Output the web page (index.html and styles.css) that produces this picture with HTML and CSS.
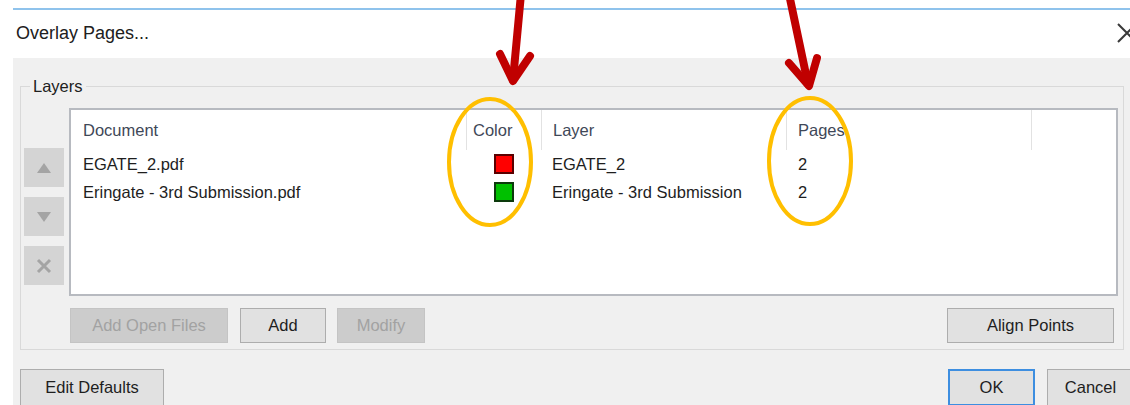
FILE: index.html
```html
<!DOCTYPE html>
<html lang="en">
<head>
<meta charset="utf-8">
<title>Overlay Pages...</title>
<link rel="stylesheet" href="styles.css">
</head>
<body>
<div class="window">
  <div class="titlebar">
    <span class="title">Overlay Pages...</span>
    <svg class="close" width="20" height="20" viewBox="0 0 20 20" aria-hidden="true">
      <path d="M1 1 L19 19 M19 1 L1 19" stroke="#3a3a3a" stroke-width="2" fill="none"/>
    </svg>
  </div>
  <div class="panel">
    <fieldset class="group">
      <legend>Layers</legend>
      <div class="group-main">
        <div class="tools">
          <button class="tool" type="button" aria-label="Move up">
            <svg width="16" height="12" viewBox="0 0 16 12"><path d="M8 1 L15 11 L1 11 Z" fill="#a4a4a4"/></svg>
          </button>
          <button class="tool" type="button" aria-label="Move down">
            <svg width="16" height="12" viewBox="0 0 16 12"><path d="M1 1 L15 1 L8 11 Z" fill="#a4a4a4"/></svg>
          </button>
          <button class="tool" type="button" aria-label="Remove">
            <svg width="16" height="16" viewBox="0 0 16 16"><path d="M2 2 L14 14 M14 2 L2 14" stroke="#a4a4a4" stroke-width="3" fill="none"/></svg>
          </button>
        </div>
        <div class="list">
          <div class="row head">
            <div class="cell c-doc">Document</div>
            <div class="cell c-color">Color</div>
            <div class="cell c-layer">Layer</div>
            <div class="cell c-pages">Pages</div>
            <div class="cell c-rest"></div>
          </div>
          <div class="row">
            <div class="cell c-doc">EGATE_2.pdf</div>
            <div class="cell c-color"><span class="swatch red"></span></div>
            <div class="cell c-layer">EGATE_2</div>
            <div class="cell c-pages">2</div>
            <div class="cell c-rest"></div>
          </div>
          <div class="row">
            <div class="cell c-doc">Eringate - 3rd Submission.pdf</div>
            <div class="cell c-color"><span class="swatch green"></span></div>
            <div class="cell c-layer">Eringate - 3rd Submission</div>
            <div class="cell c-pages">2</div>
            <div class="cell c-rest"></div>
          </div>
        </div>
      </div>
      <div class="group-actions">
        <button class="btn disabled w-open" type="button">Add Open Files</button>
        <button class="btn w-add" type="button">Add</button>
        <button class="btn disabled w-modify" type="button">Modify</button>
        <button class="btn w-align" type="button">Align Points</button>
      </div>
    </fieldset>
    <div class="footer">
      <button class="btn w-defaults" type="button">Edit Defaults</button>
      <button class="btn primary w-ok" type="button">OK</button>
      <button class="btn w-cancel" type="button">Cancel</button>
    </div>
  </div>
</div>

<svg class="marks" width="1130" height="405" viewBox="0 0 1130 405" aria-hidden="true">
  <g stroke="#c00000" stroke-width="8" fill="none" stroke-linecap="round" stroke-linejoin="round">
    <path d="M521 -6 L513 80"/>
    <path d="M500 54 L513 81 L530 56"/>
    <path d="M789 -6 L808 84"/>
    <path d="M789 63 L809 86 L817 58"/>
  </g>
  <g stroke="#ffbf00" stroke-width="4" fill="none">
    <ellipse cx="490" cy="162" rx="41" ry="63"/>
    <ellipse cx="810" cy="161" rx="41" ry="63"/>
  </g>
</svg>
</body>
</html>
```

FILE: styles.css
```css
html, body {
  margin: 0;
  padding: 0;
  background: #ffffff;
  overflow: hidden;
}

body {
  width: 1130px;
  height: 405px;
  position: relative;
  font-family: "Liberation Sans", Arial, sans-serif;
  font-size: 16.5px;
  color: #1e1e1e;
}

.window {
  margin: 8px 0 0 13px;
  border-top: 2px solid #8fc3ec;
  height: 397px;
  display: flex;
  flex-direction: column;
}

.titlebar {
  height: 48px;
  background: #ffffff;
  display: flex;
  align-items: center;
  justify-content: space-between;
  padding-left: 3px;
}

.title {
  font-size: 18px;
  color: #202020;
  padding-bottom: 1px;
}

.close {
  margin-right: -7px;
  margin-bottom: 3px;
}

.panel {
  flex: 1;
  background: #f0f0f0;
  padding: 19px 6px 0 7px;
}

.group {
  margin: 0;
  border: 1px solid #d9d9d9;
  padding: 13px 5px 6px 3px;
  min-width: 0;
}

.group legend {
  margin-left: 6px;
  padding: 0 3px;
  line-height: 18px;
  color: #202020;
}

.group-main {
  display: flex;
  gap: 5px;
}

.tools {
  width: 40px;
  padding-top: 40px;
  display: flex;
  flex-direction: column;
  gap: 10px;
}

.tool {
  width: 40px;
  height: 39px;
  border: 0;
  padding: 0;
  background: #d4d4d4;
  display: flex;
  align-items: center;
  justify-content: center;
}

.list {
  flex: 1;
  height: 188px;
  box-sizing: border-box;
  border: 2px solid #b7bac0;
  background: #ffffff;
}

.row {
  display: grid;
  grid-template-columns: 395px 75px 245px 245px 1fr;
  height: 28px;
  align-items: center;
}

.row.head {
  height: 40px;
  align-items: stretch;
  color: #3f4858;
}

.row.head .cell {
  display: flex;
  align-items: center;
}

.row.head .cell + .cell {
  border-left: 1px solid #e2e2e2;
}

.cell {
  white-space: nowrap;
  overflow: hidden;
}

.c-doc { padding-left: 12px; }
.row.head .c-color { padding-left: 6px; }
.row .c-color { padding-left: 28px; display: flex; align-items: center; }
.c-layer { padding-left: 11px; }
.c-pages { padding-left: 11px; }
.row:not(.head) .c-layer,
.row:not(.head) .c-pages { padding-left: 11px; }
.row:not(.head) .c-pages { padding-left: 12px; }

.swatch {
  display: block;
  width: 16px;
  height: 16px;
  border: 2px solid #2a2a2a;
}

.swatch.red { background: #ff0000; border-color: #5a0000; }
.swatch.green { background: #00c000; border-color: #0c3a0c; }

.group-actions {
  display: flex;
  align-items: center;
  margin-top: 12px;
  padding-left: 46px;
  padding-right: 4px;
  gap: 12px;
}

.btn {
  height: 35px;
  box-sizing: border-box;
  border: 1px solid #adadad;
  background: #e1e1e1;
  font-family: inherit;
  font-size: 16.5px;
  color: #1e1e1e;
  padding: 0;
}

.btn.disabled {
  background: #cccccc;
  border-color: #c4c4c4;
  color: #a2a2a2;
}

.btn.primary {
  border: 2px solid #3d8ee0;
}

.w-open { width: 158px; }
.w-add { width: 86px; }
.w-modify { width: 88px; margin-left: -1px; }
.w-align { width: 167px; margin-left: auto; }

.footer {
  display: flex;
  margin-top: 19px;
  margin-right: -10px;
  gap: 12px;
}

.footer .btn { height: 37px; }

.w-defaults { width: 144px; }
.w-ok { width: 87px; margin-left: auto; }
.w-cancel { width: 87px; }

.marks {
  position: absolute;
  left: 0;
  top: 0;
  pointer-events: none;
}
```
